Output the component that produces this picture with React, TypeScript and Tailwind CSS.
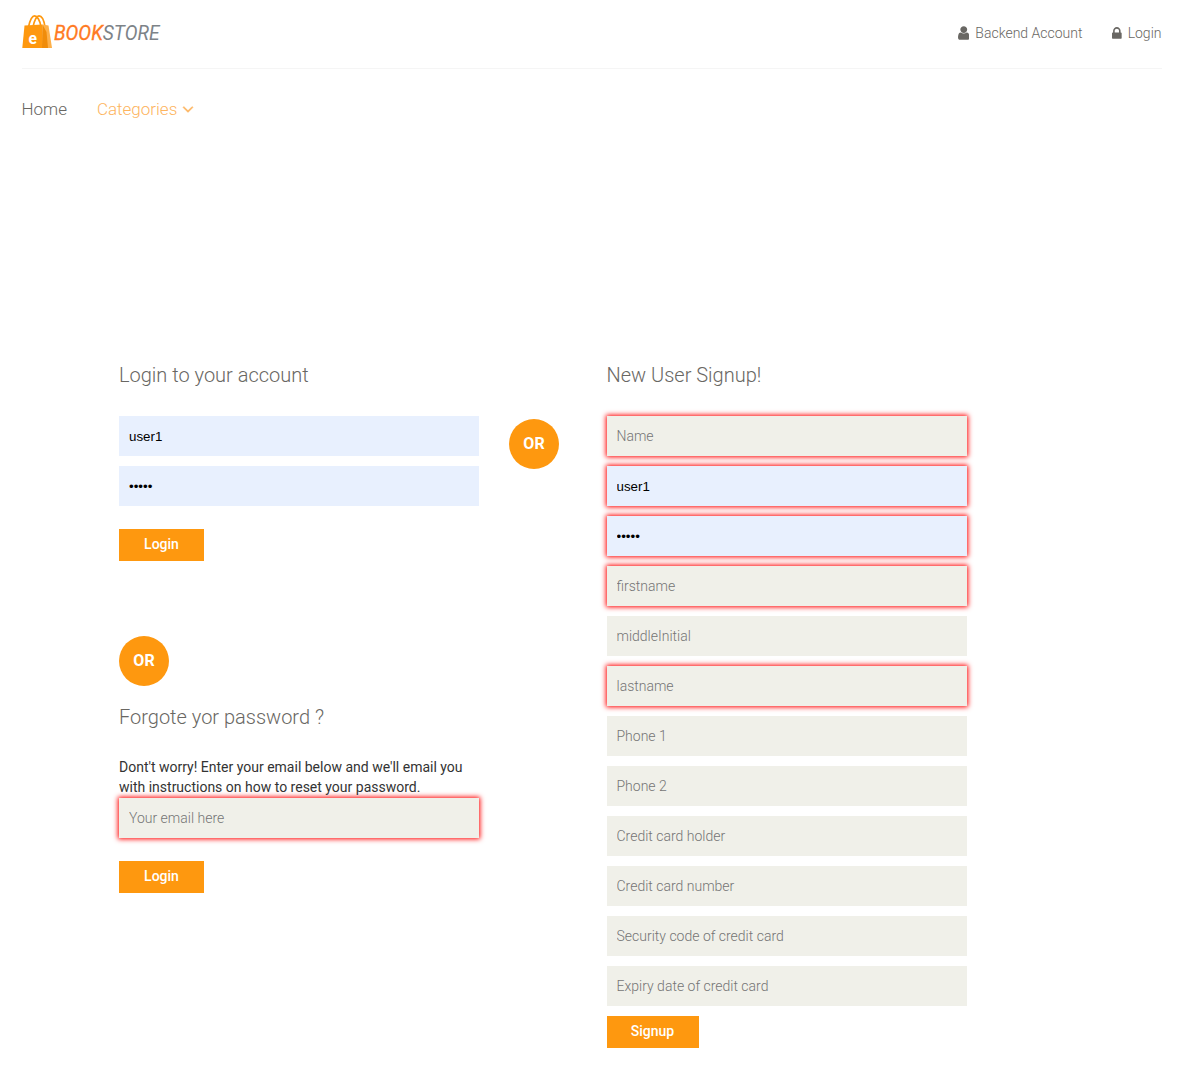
import React from "react";

type FieldProps = {
  placeholder?: string;
  value?: string;
  type?: string;
  invalid?: boolean;
  className?: string;
};

function Field({ placeholder, value, type = "text", invalid, className = "" }: FieldProps) {
  const fill = value
    ? "bg-[#e8f0fe] text-black text-[13.333px] font-['Liberation_Sans',Arial,sans-serif]"
    : "bg-[#f0f0e9] text-[14px] font-light";
  return (
    <input
      type={type}
      placeholder={placeholder}
      defaultValue={value}
      className={`block h-10 w-[360px] pl-[10px] outline-none placeholder:text-[#757575] ${fill} ${
        invalid ? "shadow-[0_0_5px_1px_red]" : ""
      } ${className}`}
    />
  );
}

function Heading({ children }: { children: React.ReactNode }) {
  return <h2 className="text-[20px] leading-[22px] font-light text-[#696763]">{children}</h2>;
}

function Action({ children, className = "" }: { children: React.ReactNode; className?: string }) {
  return (
    <button className={`block h-8 bg-[#fe980f] pb-[2px] text-[14px] font-medium text-white ${className}`}>
      {children}
    </button>
  );
}

function Or({ className = "" }: { className?: string }) {
  return (
    <div
      className={`h-[50px] w-[50px] rounded-full bg-[#fe980f] text-center text-[16px] leading-[50px] font-bold text-white ${className}`}
    >
      OR
    </div>
  );
}

function Logo() {
  return (
    <svg width="150" height="39" viewBox="0 0 150 39" className="block">
      <path d="M6.500 17C8 10 10 5.800 12.500 5.800S18 10 19 17M11 17C12.500 10 14.500 5.800 17 5.800S22 10 23 17" fill="none" stroke="#fe980f" strokeWidth="1.700" />
      <path d="M2.500 15.500L20.500 14.500L20 38H0.300Z" fill="#fe980f" />
      <path d="M20.500 14.500L26.500 15.500L30 38H20Z" fill="#fdb04a" />
      <path d="M20.500 14.500L24.500 22L26 38H20Z" fill="#f08c0a" />
      <text x="6.500" y="34" fontSize="17" fontWeight="700" fill="#fff" fontFamily="Roboto" textLength="8.500" lengthAdjust="spacingAndGlyphs">e</text>
      <text x="32" y="30" fontSize="21" fontStyle="italic" fill="#7d8388" fontFamily="Roboto" textLength="105.500" lengthAdjust="spacingAndGlyphs">
        <tspan fill="#ff7a22" stroke="#ff7a22" strokeWidth="0.350">BOOK</tspan>STORE
      </text>
    </svg>
  );
}

function UserIcon() {
  return (
    <svg width="11.500" height="16" viewBox="0 0 1280 1792" fill="#696763">
      <path d="M1280 1399q0 109-62.500 187t-150.500 78h-854q-88 0-150.500-78t-62.500-187q0-85 8.500-160.500t31.500-152 58.500-131 94-89 134.500-34.500q131 128 313 128t313-128q76 0 134.500 34.500t94 89 58.500 131 31.500 152 8.500 160.500zm-256-887q0 159-112.500 271.500t-271.500 112.500-271.500-112.500-112.500-271.500 112.500-271.500 271.500-112.500 271.500 112.500 112.500 271.500z" />
    </svg>
  );
}

function LockIcon() {
  return (
    <svg width="9.700" height="15" viewBox="0 0 1152 1792" fill="#696763">
      <path d="M320 768h512v-192q0-106-75-181t-181-75-181 75-75 181v192zm832 96v576q0 40-28 68t-68 28h-960q-40 0-68-28t-28-68v-576q0-40 28-68t68-28h32v-192q0-184 132-316t316-132 316 132 132 316v192h32q40 0 68 28t28 68z" />
    </svg>
  );
}

function Chevron() {
  return (
    <svg width="12" height="18" viewBox="0 0 1152 1792" fill="#fdb45e" stroke="#fdb45e" strokeWidth="40" className="mb-[2px]">
      <path d="M1075 736q0 13-10 23l-466 466q-10 10-23 10t-23-10l-466-466q-10-10-10-23t10-23l50-50q10-10 23-10t23 10l393 393 393-393q10-10 23-10t23 10l50 50q10 10 10 23z" />
    </svg>
  );
}

const signup: FieldProps[] = [
  { placeholder: "Name", invalid: true },
  { value: "user1", invalid: true },
  { value: "12345", type: "password", invalid: true },
  { placeholder: "firstname", invalid: true },
  { placeholder: "middleInitial" },
  { placeholder: "lastname", invalid: true },
  { placeholder: "Phone 1" },
  { placeholder: "Phone 2" },
  { placeholder: "Credit card holder" },
  { placeholder: "Credit card number" },
  { placeholder: "Security code of credit card" },
  { placeholder: "Expiry date of credit card" },
];

export default function App() {
  return (
    <div className="h-[1068px] overflow-hidden bg-white pl-[21.5px] font-[Roboto,sans-serif]">
      <header className="flex h-[69px] w-[1140px] justify-between border-b border-[#f5f5f5] pt-[10px]">
        <Logo />
        <div className="flex h-[46px] items-center gap-[29.5px] text-[14px] font-light text-[#696763]">
          <a className="flex items-center gap-[6px]"><UserIcon />Backend Account</a>
          <a className="flex items-center gap-[6px]"><LockIcon />Login</a>
        </div>
      </header>
      <nav className="flex h-[80px] items-center gap-[30px] pt-[2px] text-[17px] font-light">
        <a className="text-[#696763]">Home</a>
        <a className="flex items-center gap-[5px] text-[#fdb45e]">Categories <Chevron /></a>
      </nav>
      <main className="flex pt-[215px] pl-[97.5px]">
        <section className="w-[360px]">
          <Heading>Login to your account</Heading>
          <div className="mt-[30px] flex flex-col gap-[10px]">
            <Field value="user1" />
            <Field value="12345" type="password" />
          </div>
          <Action className="mt-[23px] w-[85px]">Login</Action>
          <Or className="mt-[75px]" />
          <div className="mt-5"><Heading>Forgote yor password ?</Heading></div>
          <p className="mt-[29px] text-[14px] leading-5 text-[#333]">
            Dont't worry! Enter your email below and we'll email you with instructions on how to reset your password.
          </p>
          <Field placeholder="Your email here" invalid className="mt-[1px]" />
          <Action className="mt-[23px] w-[85px]">Login</Action>
        </section>
        <Or className="mt-[55px] ml-[30px] shrink-0" />
        <section className="ml-[47.5px] w-[360px]">
          <Heading>New User Signup!</Heading>
          <div className="mt-[30px] flex flex-col gap-[10px]">
            {signup.map((field, i) => (
              <Field key={i} {...field} />
            ))}
            <Action className="w-[92px]">Signup</Action>
          </div>
        </section>
      </main>
    </div>
  );
}
